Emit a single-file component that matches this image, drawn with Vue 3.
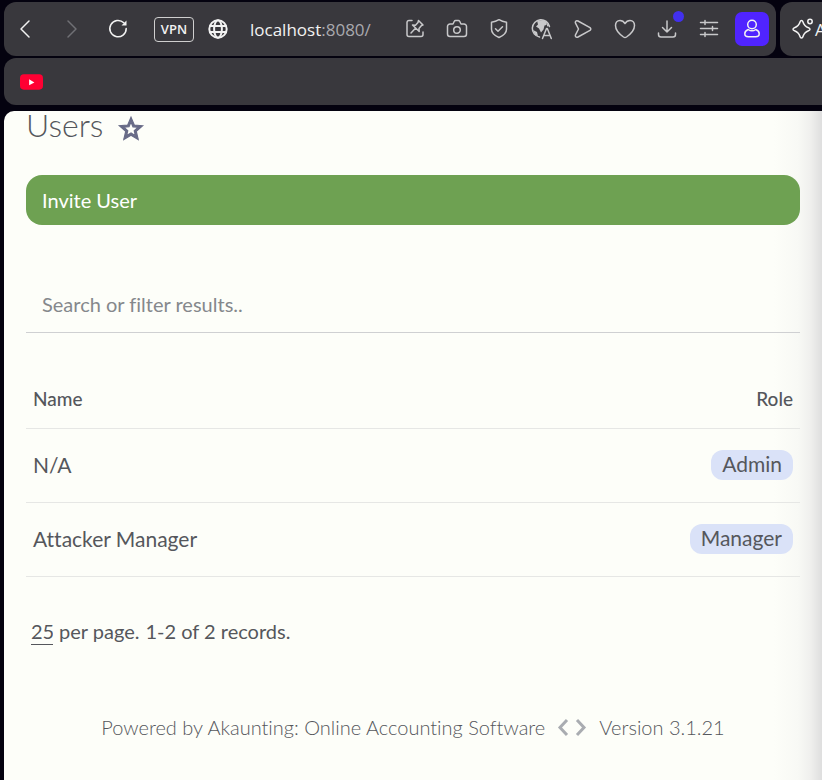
<template>
  <div class="browser">
    <header class="chrome">
      <div class="toolbar">
        <nav class="nav">
          <button class="icon-btn" aria-label="Back">
            <svg viewBox="0 0 24 24"><path d="M15 4L7 12l8 8" /></svg>
          </button>
          <button class="icon-btn muted" aria-label="Forward" disabled>
            <svg viewBox="0 0 24 24"><path d="M8 4l8 8-8 8" /></svg>
          </button>
          <button class="icon-btn" aria-label="Reload">
            <svg viewBox="0 0 24 24">
              <path d="M20.200 11.500A8.200 8.200 0 1 1 17.800 5.800" />
              <path class="solid" d="M20.500 3.500v5h-5z" />
            </svg>
          </button>
        </nav>
        <button class="vpn">VPN</button>
        <button class="icon-btn globe" aria-label="Site information">
          <svg viewBox="0 0 24 24">
            <circle cx="12" cy="12" r="8.700" />
            <ellipse cx="12" cy="12" rx="3.900" ry="8.700" />
            <path d="M4.200 9h15.600M4.200 15h15.600" />
          </svg>
        </button>
        <div class="address">localhost<span>:8080/</span></div>
        <div class="actions">
          <button v-for="item in actions" :key="item.label" class="icon-btn" :aria-label="item.label">
            <svg viewBox="0 0 24 24">
              <path v-for="d in item.paths" :key="d" :d="d" />
              <path v-if="item.fill" class="solid" :d="item.fill" />
            </svg>
            <span v-if="item.badge" class="dot" />
          </button>
        </div>
        <button class="profile" aria-label="Profile">
          <svg viewBox="0 0 24 24">
            <circle cx="12" cy="7.500" r="4.300" />
            <path d="M8.200 12.500c-2 .8-3.400 2.400-3.400 4.200 0 2 1.400 3 3.500 3h7.400c2.100 0 3.500-1 3.500-3 0-1.800-1.400-3.400-3.400-4.200-2.400 1.700-5.200 1.700-7.600 0z" />
          </svg>
        </button>
      </div>
      <button class="assistant">
        <svg viewBox="0 0 24 24">
          <path d="M10.500 3.500c.8 0 1.200.5 1.500 1.500 1 3.500 2 4.500 5.500 5.700 2 .7 2 2.300 0 3C14 15 13 16 12 19.500c-.5 2-2.500 2-3 0C8 16 7 15 3.500 13.700c-2-.7-2-2.300 0-3C7 9.500 8 8.500 9 5c.3-1 .7-1.500 1.500-1.500z" />
          <circle cx="19" cy="4.500" r="2.200" />
        </svg>
        <span>A</span>
      </button>
    </header>

    <div class="bookmarks">
      <a href="#" aria-label="YouTube">
        <svg viewBox="0 0 24 16">
          <rect width="24" height="16" rx="4" fill="#ff0033" />
          <path d="M9.500 5v6.500l5.500-3z" fill="#fff" />
        </svg>
      </a>
    </div>

    <main class="page">
      <div class="title">
        <h1>Users</h1>
        <button class="star" aria-label="Add to favorites">
          <svg viewBox="0 0 24 24">
            <path d="M22 9.240l-7.190-.62L12 2 9.190 8.630 2 9.240l5.460 4.730L5.820 21 12 17.270 18.180 21l-1.630-7.030L22 9.240zM12 15.400l-3.760 2.270 1-4.280-3.320-2.880 4.380-.38L12 6.100l1.710 4.040 4.380.38-3.320 2.880 1 4.280L12 15.400z" />
          </svg>
        </button>
      </div>

      <button class="invite">Invite User</button>

      <input v-model="search" class="search" type="text" placeholder="Search or filter results.." aria-label="Search or filter results" />

      <table class="users">
        <thead>
          <tr>
            <th>Name</th>
            <th>Role</th>
          </tr>
        </thead>
        <tbody>
          <tr v-for="user in users" :key="user.name">
            <td>{{ user.name }}</td>
            <td><span class="role">{{ user.role }}</span></td>
          </tr>
        </tbody>
      </table>

      <div class="pagination">
        <select id="limit" v-model="limit">
          <option v-for="n in [10, 25, 50]" :key="n" :value="n">{{ n }}</option>
        </select>
        <label for="limit">per page.</label>
        <span>1-2 of 2 records.</span>
      </div>

      <footer class="footer">
        <span>Powered by <a href="#">Akaunting: Online Accounting Software</a></span>
        <svg viewBox="0 0 30 20"><path d="M10 3L3 10.500 10 18M20 3l7 7.500L20 18" /></svg>
        <span>Version 3.1.21</span>
      </footer>
    </main>
  </div>
</template>

<script setup>
import { ref } from 'vue'

const search = ref('')
const limit = ref(25)

const users = [
  { name: 'N/A', role: 'Admin' },
  { name: 'Attacker Manager', role: 'Manager' }
]

const actions = [
  {
    label: 'Pin page',
    paths: [
      'M9 3.500H6A2 2 0 0 0 4 5.500v12a2 2 0 0 0 2 2h12a2 2 0 0 0 2-2V15',
      'M15.500 3.500l4.500 4.500-1.500.5-2.500 3 .2 3L9.500 8l3 .2L15 5.500zM12.500 11.300L8 16'
    ]
  },
  {
    label: 'Snapshot',
    paths: [
      'M5 7h3l1.200-2.500q.5-1 1.500-1h2.600q1 0 1.500 1L16 7h3a2.500 2.500 0 0 1 2.500 2.500v7.500a2.500 2.500 0 0 1-2.500 2.500H5A2.500 2.500 0 0 1 2.500 17v-7.500A2.500 2.500 0 0 1 5 7z',
      'M15.300 13a3.300 3.300 0 1 1-6.600 0 3.300 3.300 0 1 1 6.600 0z'
    ]
  },
  {
    label: 'Ad blocker',
    paths: [
      'M12 2.700c2.200 1.400 4.600 2.200 7.500 2.500v7c0 4-3 6.300-7.500 8.300-4.500-2-7.500-4.300-7.500-8.300v-7C7.400 4.900 9.800 4.100 12 2.700z',
      'M8.500 11.700l2.500 2.500 4.500-4.500'
    ]
  },
  {
    label: 'Translate',
    paths: [
      'M10.500 20A8.700 8.700 0 1 1 20.500 9.500',
      'M13.500 21.500l4-10h.8l4 10M14.800 18.500h6.200'
    ],
    fill: 'M8 3.500l7-.5 3 2.500-.5 2.500-2 .5-1 4-2.500 3-2-4-3-2 2-2zM4 13l4 2 1 4-3-1zM18 6l2 3-2 .5z'
  },
  {
    label: 'Send',
    paths: ['M7 4l12 6.600q1.600 1.400 0 2.800L7 20c-2 .8-3.200-.6-2.500-2.200L7.500 12l-3-5.800C3.800 4.600 5 3.200 7 4z']
  },
  {
    label: 'Favorite',
    paths: ['M12 6.500C10.500 4 8.800 3.500 7 3.500c-3 0-4.500 2.500-4.500 5 0 5 4.500 9 8 11.500q1.500 1 3 0c3.500-2.500 8-6.500 8-11.500 0-2.500-1.500-5-4.500-5-1.800 0-3.500.5-5 3z']
  },
  {
    label: 'Downloads',
    paths: ['M12 4v11M7.500 10.500L12 15l4.500-4.500M3.500 16v1.500q0 2.500 2.500 2.500h12q2.500 0 2.500-2.500V16'],
    badge: true
  },
  {
    label: 'Easy setup',
    paths: ['M3.500 5.500h17M3.500 11.500h17M3.500 17.500h17M8 3.500v4M15.500 9.500v4M8 15.500v4']
  }
]
</script>

<style>
body {
  background: #04020f;
}
</style>

<style scoped>
.browser {
  display: flex;
  flex-direction: column;
  min-height: 100vh;
  padding: 2px 0 0 4px;
  box-sizing: border-box;
  overflow: hidden;
  background: #04020f;
  font-family: Lato, "Liberation Sans", sans-serif;
}

button {
  padding: 0;
  border: 0;
  background: none;
  color: inherit;
  font: inherit;
  cursor: pointer;
}

a {
  color: inherit;
  text-decoration: none;
}

.chrome {
  display: flex;
  gap: 4px;
  height: 54px;
  color: #f2f2f2;
}

.toolbar {
  display: flex;
  flex: 1;
  align-items: center;
  min-width: 0;
  padding: 0 7px 0 10px;
  border-radius: 12px;
  background: #39383d;
}

.nav {
  display: flex;
  gap: 22px;
}

.icon-btn {
  position: relative;
  width: 24px;
  height: 24px;
}

.chrome svg {
  display: block;
  width: 24px;
  height: 24px;
  flex: none;
  fill: none;
  stroke: currentColor;
  stroke-width: 1.500;
  stroke-linecap: round;
  stroke-linejoin: round;
}

.chrome .solid {
  fill: currentColor;
  stroke: none;
}

.muted {
  color: #707075;
}

.vpn {
  width: 40px;
  height: 25px;
  margin-left: 24px;
  border: 1px solid #cfcfcf;
  border-radius: 4px;
  font: 600 13px "Open Sans", sans-serif;
}

.globe {
  margin: 0 20px 0 12px;
}

.globe svg {
  stroke-width: 2;
}

.address {
  flex: 1;
  font: 500 17px "Open Sans", sans-serif;
}

.address span {
  color: #a9a9ae;
  font-weight: 400;
}

.actions {
  display: flex;
  gap: 18px;
  color: #c8c8ca;
}

.dot {
  position: absolute;
  top: -6px;
  right: -5px;
  width: 11px;
  height: 11px;
  border-radius: 50%;
  background: #4230ee;
}

.profile {
  display: grid;
  place-items: center;
  width: 34px;
  height: 34px;
  margin-left: 14px;
  border-radius: 7px;
  background: #5024ff;
}

.assistant {
  display: flex;
  align-items: center;
  width: 42px;
  padding-left: 11px;
  box-sizing: border-box;
  overflow: hidden;
  border-radius: 12px 0 0 12px;
  background: #39383d;
  font: 17px "Open Sans", sans-serif;
}

.bookmarks {
  display: flex;
  align-items: center;
  height: 47px;
  margin-top: 2px;
  padding-left: 16px;
  border-radius: 12px 0 0 12px;
  background: #39383d;
}

.bookmarks svg {
  display: block;
  width: 23px;
  height: 16px;
}

.page {
  display: flex;
  flex: 1;
  flex-direction: column;
  margin-top: 6px;
  padding: 0 22px;
  border-radius: 10px 0 0 0;
  background: linear-gradient(to left, #dedede, #f0f0ee 12px, #f8f9f5 24px, #fdfef9 48px);
  color: #55575c;
  font-size: 20px;
  font-variant-ligatures: none;
  line-height: 24px;
}

.title {
  display: flex;
  align-items: center;
  gap: 14px;
  height: 36px;
}

h1 {
  margin: 0;
  padding-bottom: 8px;
  font-size: 32px;
  font-weight: 300;
  line-height: 36px;
}

.star svg {
  display: block;
  width: 28px;
  height: 28px;
  fill: #686b87;
  stroke: #686b87;
  stroke-width: 1;
}

.invite {
  height: 50px;
  margin-top: 28px;
  padding: 0 16px;
  border-radius: 16px;
  background: #6ea152;
  color: #fff;
  text-align: left;
}

.search {
  height: 56px;
  margin-top: 52px;
  padding: 0 16px 2px;
  box-sizing: border-box;
  border: 0;
  border-bottom: 1px solid #cfd0d2;
  outline: 0;
  background: none;
  color: inherit;
  font: inherit;
}

.search::placeholder {
  color: #85888c;
  opacity: 1;
}

.users {
  width: 100%;
  margin-top: 38px;
  border-collapse: collapse;
}

th,
td {
  height: 71px;
  padding: 0 7px 2px;
  border-bottom: 1px solid #e6e7e5;
  font-size: 21px;
  text-align: left;
}

th {
  height: 55px;
  font-size: 19px;
  font-weight: 500;
}

th:last-child,
td:last-child {
  text-align: right;
}

.role {
  display: inline-block;
  padding: 2px 11px 4px;
  border-radius: 12px;
  background: #dae2f8;
}

.pagination {
  display: flex;
  gap: 6px;
  margin-top: 42px;
  padding-left: 5px;
}

select {
  width: 22px;
  height: 26px;
  padding: 0 0 2px;
  border: 0;
  border-bottom: 1px solid #55575c;
  border-radius: 0;
  appearance: none;
  background: none;
  color: inherit;
  font: inherit;
}

.footer {
  display: flex;
  align-items: center;
  justify-content: center;
  gap: 12px;
  margin-top: 70px;
  font-weight: 300;
}

.footer svg {
  width: 30px;
  height: 20px;
  fill: none;
  stroke: #a9acb1;
  stroke-width: 3;
}
</style>
